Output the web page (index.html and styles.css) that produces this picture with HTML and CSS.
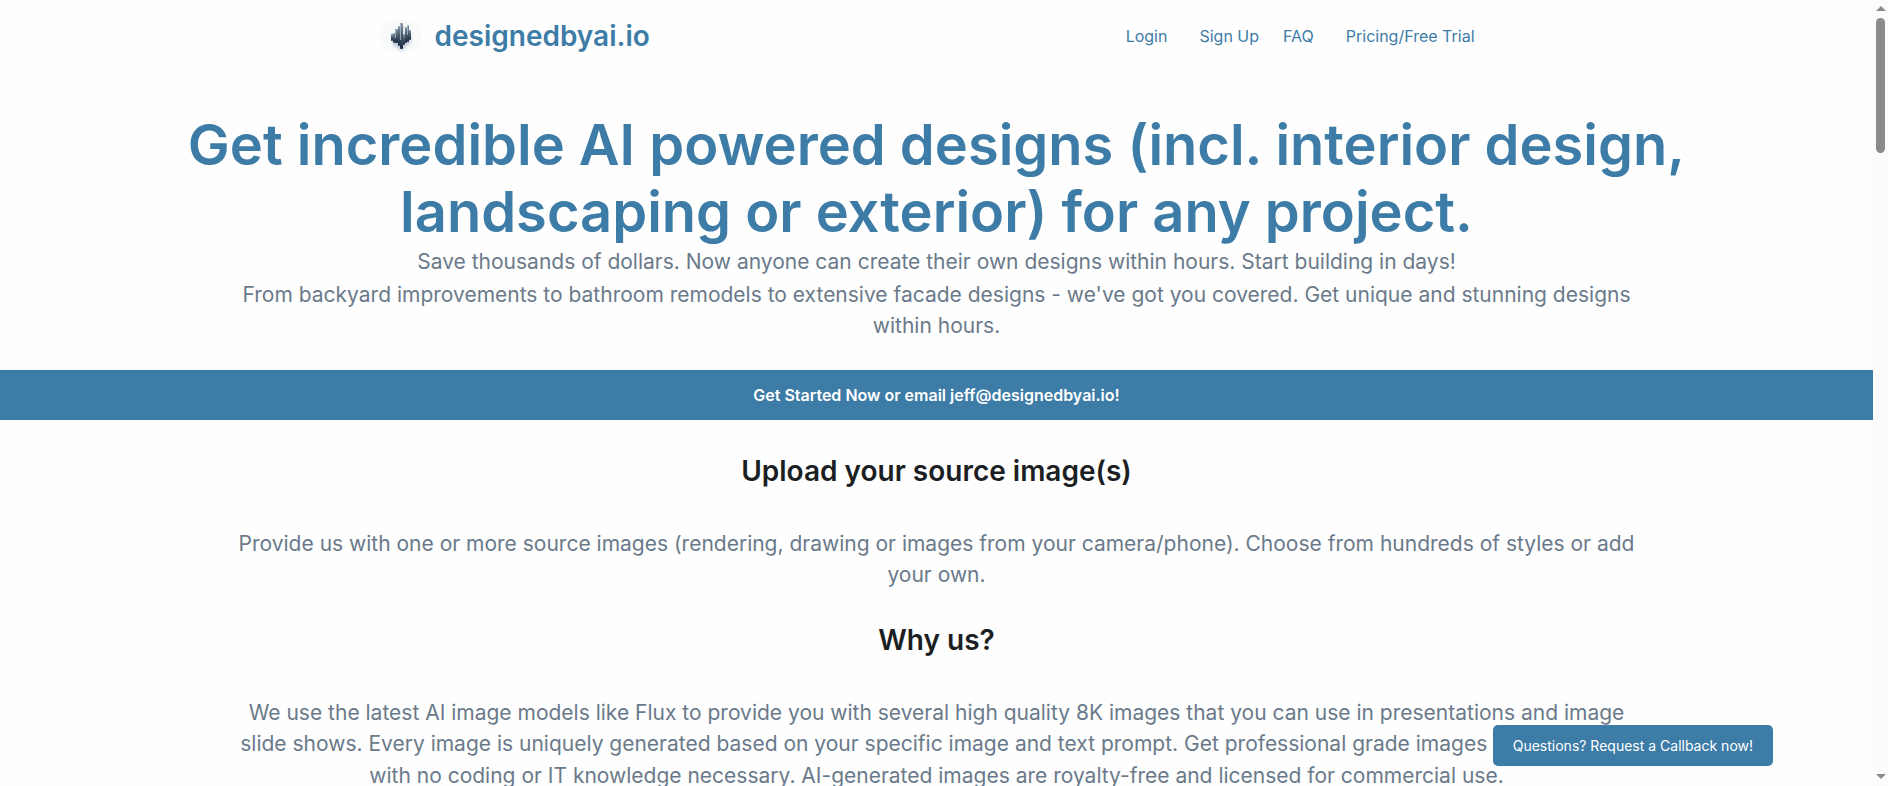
FILE: index.html
```html
<!DOCTYPE html>
<html lang="en">
<head>
<meta charset="utf-8">
<title>designedbyai.io</title>
<link rel="stylesheet" href="styles.css">
</head>
<body>
<div class="shell">
  <div class="page">
    <header class="header">
      <a class="brand" href="#">
        <svg class="logo" viewBox="0 0 44 34" aria-hidden="true">
          <defs>
            <linearGradient id="bar" x1="0" y1="0" x2="0" y2="1">
              <stop offset="0" stop-color="#8496a6"/>
              <stop offset=".5" stop-color="#46576c"/>
              <stop offset="1" stop-color="#1c2940"/>
            </linearGradient>
            <filter id="soft" x="-50%" y="-50%" width="200%" height="200%"><feGaussianBlur stdDeviation="1.6"/></filter>
          </defs>
          <ellipse cx="22" cy="17" rx="22" ry="17" fill="#f9fafa"/>
          <path d="M12 15h20v8l-9 9-9-6z" fill="#aeb9d4" opacity=".7" filter="url(#soft)"/>
          <g fill="url(#bar)">
            <rect x="12" y="15" width="2" height="7" rx="1"/>
            <rect x="14" y="14" width="2" height="10" rx="1"/>
            <rect x="16" y="10" width="3" height="14" rx="1"/>
            <rect x="19" y="7" width="2" height="20" rx="1"/>
            <rect x="21" y="4" width="3" height="26" rx="1"/>
            <rect x="24" y="15" width="2" height="11" rx="1"/>
            <rect x="26" y="8" width="2" height="16" rx="1"/>
            <rect x="28" y="6" width="2" height="17" rx="1"/>
            <rect x="30" y="11" width="2" height="10" rx="1"/>
          </g>
          <path d="M21.500 5v16M25 7v7M28.500 7v9M16.500 11v8" stroke="#c0ccd6" stroke-width="1" opacity=".7"/>
        </svg>
        <span class="brand-name">designedbyai.io</span>
      </a>
      <nav class="nav">
        <a class="nav-link nav-link-wide" href="#">Login</a>
        <a class="nav-link" href="#">Sign Up</a>
        <a class="nav-link nav-link-wide" href="#">FAQ</a>
        <a class="nav-link" href="#">Pricing/Free Trial</a>
      </nav>
    </header>
    <main>
      <section class="hero">
        <h1 class="hero-title">Get incredible AI powered designs (incl. interior design, landscaping or exterior) for any project.</h1>
        <p class="text">Save thousands of dollars. Now anyone can create their own designs within hours. Start building in days!</p>
        <p class="text">From backyard improvements to bathroom remodels to extensive facade designs - we've got you covered. Get unique and stunning designs within hours.</p>
      </section>
      <a class="cta" href="#">Get Started Now or email jeff@designedbyai.io!</a>
      <section class="block">
        <h2 class="block-title">Upload your source image(s)</h2>
        <p class="text">Provide us with one or more source images (rendering, drawing or images from your camera/phone). Choose from hundreds of styles or add your own.</p>
      </section>
      <section class="block">
        <h2 class="block-title">Why us?</h2>
        <p class="text">We use the latest AI image models like Flux to provide you with several high quality 8K images that you can use in presentations and image slide shows. Every image is uniquely generated based on your specific image and text prompt. Get professional grade images in a few hours with no coding or IT knowledge necessary. AI-generated images are royalty-free and licensed for commercial use.</p>
      </section>
    </main>
  </div>
  <div class="scrollbar" aria-hidden="true">
    <svg class="arrow" viewBox="0 0 10 5"><path d="M0 5L5 0L10 5z"/></svg>
    <div class="track"><div class="thumb"></div></div>
    <svg class="arrow" viewBox="0 0 10 5"><path d="M0 0L5 5L10 0z"/></svg>
  </div>
</div>
<button class="callback" type="button">Questions? Request a Callback now!</button>
</body>
</html>
```
FILE: styles.css
```css
* { box-sizing: border-box; }
body {
  margin: 0;
  background: #fefefe;
  font-family: Inter, "Liberation Sans", sans-serif;
  color: #1b1f23;
}
h1, h2, p { margin: 0; }
a { text-decoration: none; }
.shell {
  display: flex;
  height: 100vh;
  overflow: hidden;
}
.page { flex: 1; overflow: hidden; }
.header {
  display: flex;
  justify-content: space-between;
  align-items: center;
  max-width: 1116px;
  height: 72px;
  margin: 0 auto;
  padding-right: 20px;
}
.brand { display: flex; align-items: center; gap: 12px; }
.logo { width: 44px; height: 34px; }
.brand-name {
  color: #3d7ca6;
  font-size: 28px;
  font-weight: 600;
  line-height: 34px;
}
.nav { display: flex; gap: 24px; }
.nav-link { color: #3d7ca6; font-size: 16px; line-height: 24px; }
.nav-link-wide { margin-right: 8px; }
.hero {
  padding: 40px 24px 28px;
  text-align: center;
}
.hero-title {
  max-width: 1600px;
  margin: 0 auto;
  color: #3d7ca6;
  font-size: 56px;
  font-weight: 600;
  line-height: 1.2;
}
.text {
  max-width: 1400px;
  margin: 0 auto;
  color: #6a7a8a;
  font-size: 21px;
  line-height: 1.5;
  text-align: center;
}
.text + .text { margin-top: 1px; }
.cta {
  display: block;
  margin-bottom: 2px;
  padding: 13px 24px;
  background: #3d7ca6;
  color: #fff;
  font-size: 16px;
  font-weight: 600;
  line-height: 24px;
  text-align: center;
}
.block { padding-top: 32px; }
.block-title {
  margin-bottom: 40px;
  font-size: 28px;
  font-weight: 600;
  line-height: 34px;
  text-align: center;
}
.scrollbar {
  display: flex;
  flex-direction: column;
  align-items: center;
  width: 15px;
  padding: 6px 0 7px;
  background: #fcfcfc;
}
.arrow { width: 10px; height: 5px; fill: #8b8b8b; }
.track { flex: 1; padding: 7px 0; }
.thumb {
  width: 9px;
  height: 18%;
  border-radius: 5px;
  background: #8b8b8b;
}
.callback {
  position: fixed;
  right: 115px;
  bottom: 20px;
  padding: 10px 20px;
  border: 0;
  border-radius: 5px;
  background: #3d7ca6;
  color: #fff;
  font-family: inherit;
  font-size: 14px;
  font-weight: 400;
  line-height: 21px;
}
```
